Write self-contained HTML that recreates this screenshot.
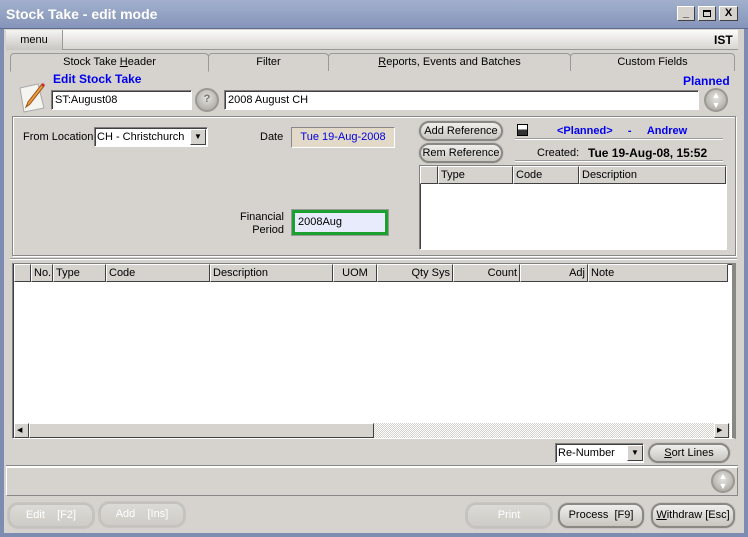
<!DOCTYPE html>
<html><head><style>
*{box-sizing:border-box;margin:0;padding:0;white-space:nowrap}
body{width:748px;height:537px;overflow:hidden;background:#7d8cb0;font-family:"Liberation Sans",sans-serif;font-size:11px;color:#000;position:relative}
.a{position:absolute}
.win{left:4px;top:29px;width:740px;height:504px;background:#d6d3ce}
.in{background:#fff;border:1px solid;border-color:#808080 #fff #fff #808080;box-shadow:inset 1px 1px 0 #404040}
.btn{border-radius:10px;border:2px solid #8a8884;background:linear-gradient(#efeeec,#c9c6c0);text-align:center;font-size:11px;box-shadow:0 0 0 1px #c8c5c0}
.dis{color:#fff;border-color:#c4c2be;background:linear-gradient(#dcdad6,#cfccc7)}
.hd{background:#d6d3ce;border:1px solid;border-color:#fff #404040 #404040 #fff;height:18px;line-height:16px;padding:0 2px;font-size:11px}
.grp{border:1px solid #888;box-shadow:1px 1px 0 #fff inset,1px 1px 0 #fff}
.tab{top:53px;height:18px;border:1px solid #999;border-bottom:none;border-radius:4px 4px 0 0;text-align:center;line-height:17px;background:#d6d3ce}
.blue{color:#0000f0;font-weight:bold}
.round{border-radius:50%;background:radial-gradient(circle at 50% 40%,#e6e4e0,#a19e98);border:2px solid #9b9893}
</style></head><body>
<div class="a" style="left:0;top:0;width:748px;height:29px;background:linear-gradient(#a2b0cc,#8595ba);border-bottom:1px solid #5d6b8e"></div>
<div class="a" style="left:6px;top:6px;color:#fff;font-weight:bold;font-size:14px">Stock Take - edit mode</div>
<div class="a" style="left:677px;top:6px;width:18px;height:15px;background:#d6d3ce;border:1px solid;border-color:#fff #404040 #404040 #fff;font-weight:bold;text-align:center;line-height:12px">_</div>
<div class="a" style="left:698px;top:6px;width:18px;height:15px;background:#d6d3ce;border:1px solid;border-color:#fff #404040 #404040 #fff"><div class="a" style="left:4px;top:3px;width:8px;height:7px;border:1px solid #000;border-top-width:2px"></div></div>
<div class="a" style="left:719px;top:6px;width:19px;height:15px;background:#d6d3ce;border:1px solid;border-color:#fff #404040 #404040 #fff;font-weight:bold;text-align:center;line-height:13px">X</div>
<div class="a win"></div>
<div class="a" style="left:6px;top:30px;width:732px;height:20px;background:linear-gradient(#fbfbfa,#d8d6d2);border-bottom:1px solid #999"></div>
<div class="a" style="left:6px;top:30px;width:57px;height:20px;background:linear-gradient(#f4f4f2,#c8c6c2);border-right:1px solid #999;text-align:center;line-height:20px">menu</div>
<div class="a" style="left:714px;top:33px;font-weight:bold;font-size:12px">IST</div>
<div class="a" style="left:10px;top:70px;width:725px;height:1px;background:#fff"></div>
<div class="a tab" style="left:10px;width:199px;border-bottom:1px solid #d6d3ce;height:19px">Stock Take <u>H</u>eader</div>
<div class="a tab" style="left:208px;width:121px">Filter</div>
<div class="a tab" style="left:328px;width:243px"><u>R</u>eports, Events and Batches</div>
<div class="a tab" style="left:570px;width:165px">Custom Fields</div>
<div class="a blue" style="left:53px;top:72px;font-size:12px">Edit Stock Take</div>
<div class="a blue" style="left:683px;top:74px;font-size:12px">Planned</div>
<svg class="a" style="left:16px;top:80px" width="32" height="34"><path d="M4 8 L22 4 L28 28 L8 32 Z" fill="#f4f4f0" stroke="#aaa"/><path d="M26 4 L12 22 L10 27 L14 24 L28 6 Z" fill="#e8a040" stroke="#a05010"/><path d="M26 4 l2 2" stroke="#d03030" stroke-width="3"/></svg>
<div class="a in" style="left:51px;top:90px;width:141px;height:20px;padding:3px 3px">ST:August08</div>
<div class="a round" style="left:195px;top:88px;width:24px;height:24px;text-align:center;line-height:19px;color:#777;font-weight:bold">?</div>
<div class="a in" style="left:224px;top:90px;width:475px;height:20px;padding:3px 3px">2008 August CH</div>
<div class="a round" style="left:704px;top:88px;width:24px;height:24px;text-align:center;font-size:9px;line-height:10px;color:#fff">▲<br>▼</div>
<div class="a grp" style="left:12px;top:116px;width:724px;height:140px"></div>
<div class="a" style="left:23px;top:131px">From Location</div>
<div class="a in" style="left:94px;top:127px;width:114px;height:20px;padding:3px 2px">CH - Christchurch</div>
<div class="a" style="left:190px;top:129px;width:16px;height:16px;background:#d6d3ce;border:1px solid;border-color:#fff #404040 #404040 #fff;font-size:8px;text-align:center;line-height:14px">▼</div>
<div class="a" style="left:260px;top:131px">Date</div>
<div class="a" style="left:291px;top:127px;width:104px;height:21px;background:#e2d9c8;border:1px solid;border-color:#888 #fff #fff #888;color:#0000e0;padding:3px 0;text-align:center">Tue 19-Aug-2008</div>
<div class="a" style="left:230px;top:211px;width:54px;text-align:right;line-height:13px">Financial<br>Period</div>
<div class="a" style="left:292px;top:210px;width:96px;height:25px;border:3px solid #1ca030;outline:1px solid #999;background:#e8ebfb;padding:3px 3px">2008Aug</div>
<div class="a btn" style="left:419px;top:121px;width:84px;height:20px;line-height:16px">Add Reference</div>
<div class="a btn" style="left:419px;top:143px;width:84px;height:20px;line-height:16px">Rem Reference</div>
<div class="a" style="left:517px;top:124px;width:11px;height:12px;border:1px solid #000;background:linear-gradient(#fff 45%,#333 45%)"></div>
<div class="a blue" style="left:557px;top:125px;font-size:11px">&lt;Planned&gt;&nbsp;&nbsp;&nbsp;&nbsp;&nbsp;-&nbsp;&nbsp;&nbsp;&nbsp;&nbsp;Andrew</div>
<div class="a" style="left:515px;top:138px;width:208px;height:2px;border-top:1px solid #999;border-bottom:1px solid #fff"></div>
<div class="a" style="left:537px;top:147px">Created:</div>
<div class="a" style="left:588px;top:146px;font-weight:bold;font-size:12px">Tue 19-Aug-08, 15:52</div>
<div class="a" style="left:515px;top:160px;width:208px;height:2px;border-top:1px solid #999;border-bottom:1px solid #fff"></div>
<div class="a in" style="left:419px;top:165px;width:308px;height:85px"></div>
<div class="a hd" style="left:420px;top:166px;width:18px"></div>
<div class="a hd" style="left:438px;top:166px;width:75px">Type</div>
<div class="a hd" style="left:513px;top:166px;width:66px">Code</div>
<div class="a hd" style="left:579px;top:166px;width:147px">Description</div>
<div class="a" style="left:10px;top:258px;width:727px;height:2px;border-top:1px solid #999;border-bottom:1px solid #fff"></div>
<div class="a in" style="left:12px;top:263px;width:724px;height:176px;border-right:4px solid #8a8884"></div>
<div class="a hd" style="left:14px;top:264px;width:17px"></div>
<div class="a hd" style="left:31px;top:264px;width:22px">No.</div>
<div class="a hd" style="left:53px;top:264px;width:53px">Type</div>
<div class="a hd" style="left:106px;top:264px;width:104px">Code</div>
<div class="a hd" style="left:210px;top:264px;width:123px">Description</div>
<div class="a hd" style="left:333px;top:264px;width:44px;text-align:center">UOM</div>
<div class="a hd" style="left:377px;top:264px;width:76px;text-align:right">Qty Sys</div>
<div class="a hd" style="left:453px;top:264px;width:67px;text-align:right">Count</div>
<div class="a hd" style="left:520px;top:264px;width:68px;text-align:right">Adj</div>
<div class="a hd" style="left:588px;top:264px;width:140px">Note</div>
<div class="a" style="left:14px;top:423px;width:716px;height:15px;background:repeating-conic-gradient(#fff 0 25%,#d6d3ce 0 50%) 0 0/2px 2px"></div>
<div class="a hd" style="left:14px;top:423px;width:15px;height:15px;font-size:7px;line-height:13px">◀</div>
<div class="a hd" style="left:29px;top:423px;width:345px;height:15px"></div>
<div class="a hd" style="left:714px;top:423px;width:15px;height:15px;font-size:7px;line-height:13px">▶</div>
<div class="a in" style="left:555px;top:443px;width:89px;height:20px;padding:3px 2px">Re-Number</div>
<div class="a" style="left:627px;top:445px;width:16px;height:16px;background:#d6d3ce;border:1px solid;border-color:#fff #404040 #404040 #fff;font-size:8px;text-align:center;line-height:14px">▼</div>
<div class="a btn" style="left:648px;top:443px;width:82px;height:20px;line-height:16px"><u>S</u>ort Lines</div>
<div class="a" style="left:6px;top:465px;width:732px;height:2px;border-top:1px solid #888;border-bottom:1px solid #fff"></div>
<div class="a" style="left:6px;top:467px;width:732px;height:29px;border:1px solid;border-color:#fff #888 #888 #fff"></div>
<div class="a round" style="left:711px;top:469px;width:24px;height:24px;text-align:center;font-size:9px;line-height:10px;color:#fff">▲<br>▼</div>
<div class="a btn dis" style="left:8px;top:503px;width:86px;height:25px;line-height:21px">Edit&nbsp;&nbsp;&nbsp;&nbsp;[F2]</div>
<div class="a btn dis" style="left:99px;top:502px;width:86px;height:25px;line-height:21px">Add&nbsp;&nbsp;&nbsp;&nbsp;[Ins]</div>
<div class="a btn dis" style="left:466px;top:503px;width:86px;height:25px;line-height:21px">Print</div>
<div class="a btn" style="left:558px;top:503px;width:86px;height:25px;line-height:21px">Process&nbsp;&nbsp;[F9]</div>
<div class="a btn" style="left:651px;top:503px;width:84px;height:25px;line-height:21px"><u>W</u>ithdraw [Esc]</div>
</body></html>
